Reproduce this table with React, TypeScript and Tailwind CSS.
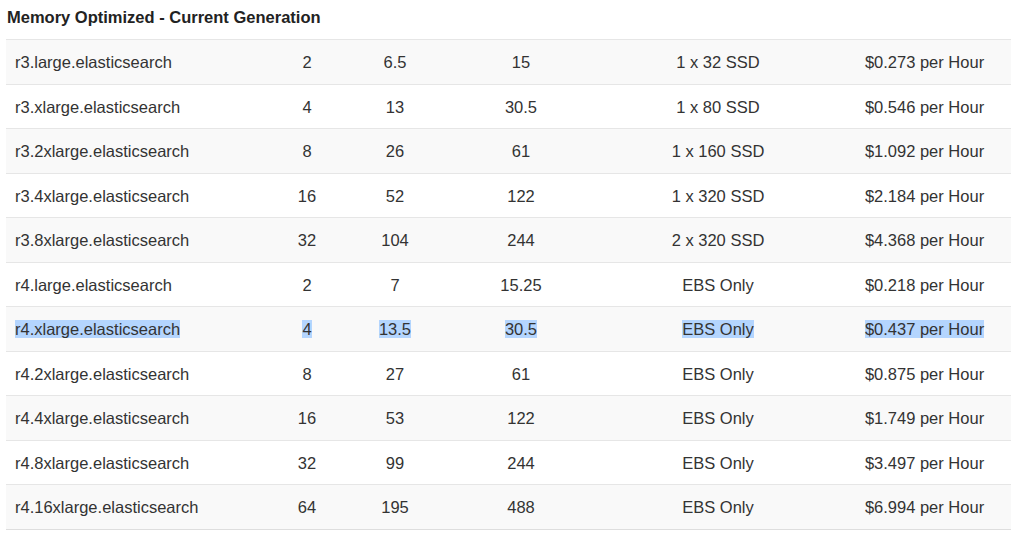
import React from "react";

const rows: [string, string, string, string, string, string][] = [
  ["r3.large.elasticsearch", "2", "6.5", "15", "1 x 32 SSD", "$0.273 per Hour"],
  ["r3.xlarge.elasticsearch", "4", "13", "30.5", "1 x 80 SSD", "$0.546 per Hour"],
  ["r3.2xlarge.elasticsearch", "8", "26", "61", "1 x 160 SSD", "$1.092 per Hour"],
  ["r3.4xlarge.elasticsearch", "16", "52", "122", "1 x 320 SSD", "$2.184 per Hour"],
  ["r3.8xlarge.elasticsearch", "32", "104", "244", "2 x 320 SSD", "$4.368 per Hour"],
  ["r4.large.elasticsearch", "2", "7", "15.25", "EBS Only", "$0.218 per Hour"],
  ["r4.xlarge.elasticsearch", "4", "13.5", "30.5", "EBS Only", "$0.437 per Hour"],
  ["r4.2xlarge.elasticsearch", "8", "27", "61", "EBS Only", "$0.875 per Hour"],
  ["r4.4xlarge.elasticsearch", "16", "53", "122", "EBS Only", "$1.749 per Hour"],
  ["r4.8xlarge.elasticsearch", "32", "99", "244", "EBS Only", "$3.497 per Hour"],
  ["r4.16xlarge.elasticsearch", "64", "195", "488", "EBS Only", "$6.994 per Hour"],
];

export default function App() {
  return (
    <div
      className="w-[1024px] h-[537px] bg-white text-[#333] overflow-hidden"
      style={{ fontFamily: '"Liberation Sans", Arial, sans-serif' }}
    >
      <div className="pl-[7px] pt-[6px] h-[39px] text-[16.5px] font-bold leading-[22px] text-[#222]">
        Memory Optimized - Current Generation
      </div>
      <div className="ml-[6px] w-[1005px] border-b border-[#dedede]">
        {rows.map((r, i) => {
          const sel = i === 6;
          const hl = sel ? "bg-[#b4d5fe]" : "";
          return (
            <div
              key={i}
              className={`grid grid-cols-[256px_90px_86px_166px_228px_179px] items-center h-[44.5px] pt-[1px] border-t border-[#e6e6e6] text-[16.5px] leading-[20px] ${
                i % 2 === 0 ? "bg-[#f9f9f9]" : "bg-white"
              }`}
            >
              <div className="pl-[9px]">
                <span className={hl}>{r[0]}</span>
              </div>
              <div className="text-center">
                <span className={hl}>{r[1]}</span>
              </div>
              <div className="text-center">
                <span className={hl}>{r[2]}</span>
              </div>
              <div className="text-center">
                <span className={hl}>{r[3]}</span>
              </div>
              <div className="text-center">
                <span className={hl}>{r[4]}</span>
              </div>
              <div className="text-center pl-[6px]">
                <span className={hl}>{r[5]}</span>
              </div>
            </div>
          );
        })}
      </div>
    </div>
  );
}
